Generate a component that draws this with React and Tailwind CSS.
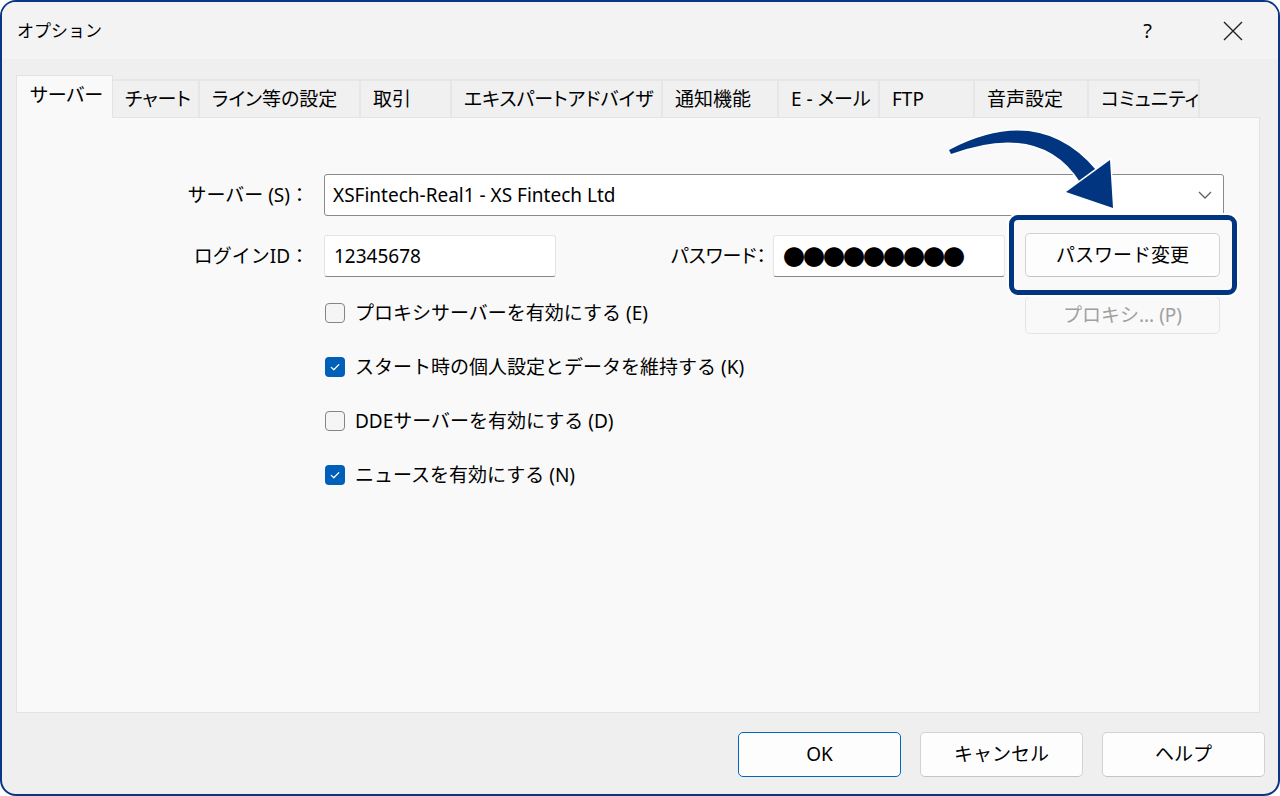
import React from "react";

const tabs = [
  { label: "サーバー", w: "w-[97px]", active: true },
  { label: "チャート", w: "w-[87px]" },
  { label: "ライン等の設定", w: "w-[161px]" },
  { label: "取引", w: "w-[91px]" },
  { label: "エキスパートアドバイザ", w: "w-[211px]" },
  { label: "通知機能", w: "w-[116px]" },
  { label: "E - メール", w: "w-[101px]" },
  { label: "FTP", w: "w-[95px]" },
  { label: "音声設定", w: "w-[114px]" },
  { label: "コミュニティ", w: "w-[111px]" },
];

const checks = [
  { label: "プロキシサーバーを有効にする (E)", on: false },
  { label: "スタート時の個人設定とデータを維持する (K)", on: true },
  { label: "DDEサーバーを有効にする (D)", on: false },
  { label: "ニュースを有効にする (N)", on: true },
];

const DOTS = "\u25CF\u25CF\u25CF\u25CF\u25CF\u25CF\u25CF\u25CF\u25CF";

function CheckBox({ on }) {
  if (on) {
    return (
      <div className="flex h-[20px] w-[20px] shrink-0 items-center justify-center rounded-[4px] bg-[#005fb8]">
        <svg width="20" height="20" viewBox="0 0 20 20">
          <path d="M6.3 10.4 L8.8 12.8 L13.8 7.6" fill="none" stroke="white" strokeWidth="1.3" strokeLinecap="round" strokeLinejoin="round" />
        </svg>
      </div>
    );
  }
  return <div className="h-[20px] w-[20px] shrink-0 rounded-[4px] border border-[#858585] bg-[#f5f5f5]" />;
}

export default function App() {
  return (
    <div className="relative h-[796px] w-[1280px] overflow-hidden bg-white text-black [font-family:'Noto_Sans','Noto_Sans_CJK_JP',sans-serif]">
      <div className="flex h-full flex-col overflow-hidden rounded-[16px] border-2 border-[#0a3683] bg-[#efefef]">
        {/* title bar */}
        <div className="flex h-[57px] shrink-0 items-center bg-[#f3f3f3] pl-[15px] pr-[34px]">
          <span className="text-[17px] leading-none">オプション</span>
          <span className="ml-auto text-[20px] leading-none">?</span>
          <svg className="ml-[70px]" width="22" height="22" viewBox="0 0 22 22">
            <path d="M2 2 L20 20 M20 2 L2 20" stroke="#222" strokeWidth="1.4" fill="none" />
          </svg>
        </div>

        {/* body */}
        <div className="flex flex-1 flex-col pl-[14px] pr-[18px] pt-[16px]">
          {/* tabs */}
          <div className="flex h-[42px] items-end text-[19px] [font-feature-settings:'palt']">
            {tabs.map((t) =>
              t.active ? (
                <div
                  key={t.label}
                  className={`relative z-10 -mb-px flex h-[43px] shrink-0 items-center border border-b-0 border-[#e3e3e3] bg-[#f9f9f9] pl-[13px] pb-[3px] ${t.w}`}
                >
                  {t.label}
                </div>
              ) : (
                <div
                  key={t.label}
                  className={`flex h-[38px] shrink-0 items-center whitespace-nowrap border-r-2 border-t-2 border-[#e6e6e6] bg-[#f0f0f0] pl-[12px] ${t.w}`}
                >
                  {t.label}
                </div>
              )
            )}
          </div>

          {/* panel */}
          <div className="h-[596px] shrink-0 border border-[#e3e3e3] bg-[#f9f9f9] text-[19px]">
            {/* server row */}
            <div className="mt-[56px] flex items-center">
              <div className="w-[292px] text-right">サーバー (S)：</div>
              <div className="ml-[15px] flex h-[42px] w-[900px] items-center rounded-[3px] border border-[#8a8a8a] bg-white pl-[8px] pr-[10px]">
                <span className="text-[19px]">XSFintech-Real1 - XS Fintech Ltd</span>
                <svg className="ml-auto" width="16" height="10" viewBox="0 0 16 10">
                  <path d="M2 2 L8 8 L14 2" fill="none" stroke="#5f5f5f" strokeWidth="1.3" />
                </svg>
              </div>
            </div>

            <div className="mt-[19px] flex">
              {/* left column */}
              <div className="w-[988px]">
                <div className="flex h-[42px] items-center">
                  <div className="w-[292px] text-right">ログインID：</div>
                  <div className="ml-[15px] flex h-[42px] w-[232px] items-center rounded-[3px] border border-[#e5e5e5] border-b-[#868686] bg-white pl-[9px]">
                    12345678
                  </div>
                  <div className="w-[210px] text-right [font-feature-settings:'palt']">パスワード：</div>
                  <div className="ml-[7px] flex h-[42px] w-[232px] items-center overflow-hidden rounded-[3px] border border-[#e5e5e5] border-b-[#868686] bg-white pl-[9px] text-[22px] tracking-[-2px]">
                    {DOTS}
                  </div>
                </div>

                <div className="mt-[22px] flex flex-col gap-[26px] pl-[308px]">
                  {checks.map((c) => (
                    <div key={c.label} className="flex h-[28px] items-center gap-[10px] whitespace-nowrap">
                      <CheckBox on={c.on} />
                      <span>{c.label}</span>
                    </div>
                  ))}
                </div>
              </div>

              {/* right column */}
              <div className="ml-[20px] flex w-[195px] flex-col">
                <div className="relative -mt-[2px]">
                  <div className="absolute -bottom-[18px] -left-[16px] -right-[17px] -top-[18px] rounded-[9px] border-[5px] border-[#023580] shadow-[0_0_0_2px_white]" />
                  <div className="relative flex h-[44px] items-center justify-center rounded-[5px] border border-[#d2d2d2] border-b-[#c4c4c4] bg-[#fdfdfd]">
                    パスワード変更
                  </div>
                </div>
                <div className="mt-[19px] flex h-[38px] items-center justify-center rounded-[5px] border border-[#e5e5e5] bg-[#f9f9f9] text-[#a0a0a0]">
                  プロキシ... (P)
                </div>
              </div>
            </div>
          </div>

          {/* bottom buttons */}
          <div className="-mr-[5px] mt-[19px] flex justify-end gap-[19px] text-[19px]">
            <div className="flex h-[45px] w-[163px] items-center justify-center rounded-[5px] border-[1.5px] border-[#0067c0] bg-[#fdfdfd]">
              OK
            </div>
            <div className="flex h-[45px] w-[163px] items-center justify-center rounded-[5px] border border-[#d2d2d2] border-b-[#c4c4c4] bg-[#fdfdfd]">
              キャンセル
            </div>
            <div className="flex h-[45px] w-[163px] items-center justify-center rounded-[5px] border border-[#d2d2d2] border-b-[#c4c4c4] bg-[#fdfdfd]">
              ヘルプ
            </div>
          </div>
        </div>
      </div>

      {/* annotation arrow */}
      <svg className="pointer-events-none absolute left-0 top-0 z-20" width="1280" height="796" viewBox="0 0 1280 796">
        <g fill="#023580" stroke="white" strokeWidth="3" strokeLinejoin="round" paintOrder="stroke">
          <path d="M949 150 Q1039 103 1096 170 L1080 182 Q1041 121 951 154 Z" />
          <path d="M1066 192 L1110 160 L1113 208 Z" />
        </g>
      </svg>
    </div>
  );
}
